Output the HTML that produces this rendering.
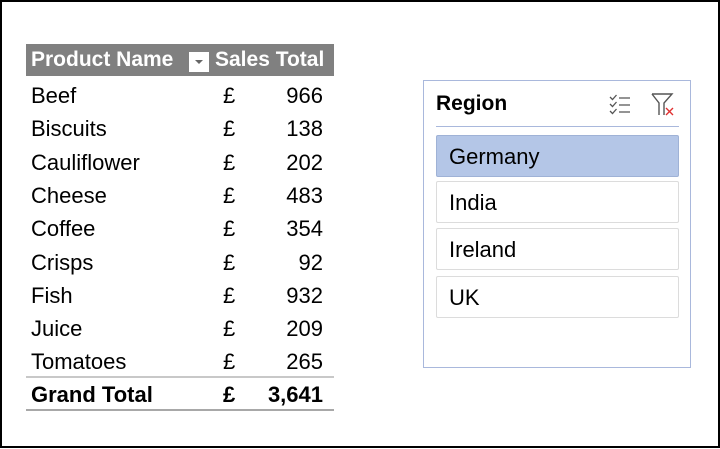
<!DOCTYPE html>
<html><head><meta charset="utf-8"><style>
*{margin:0;padding:0;box-sizing:border-box}
body{width:720px;height:449px;background:#fff;font-family:"Liberation Sans",sans-serif;overflow:hidden;position:relative}
.frame{position:absolute;left:0;top:0;width:720px;height:448px;border:2px solid #000}
.hdr{position:absolute;left:26px;top:44px;width:308px;height:32px;background:#808080;color:#fff;font-weight:bold;font-size:21px}
.row{position:absolute;left:26px;width:308px;height:33px;font-size:22px;line-height:33px}
.row span{position:absolute;top:1px}
.n{left:5px}.p{left:197px}.v{right:11px}
.gt{font-weight:bold;border-top:2px solid #c8c8c8;border-bottom:2px solid #a8a8a8}
.sl{position:absolute;left:423px;top:80px;width:268px;height:288px;border:1px solid #a9b8dc}
.item{position:absolute;left:12px;width:243px;height:42px;border:1px solid #dcdcdc;border-radius:2px;font-size:22px;line-height:42px;padding-left:12px}
</style></head><body>
<div class="frame"></div>
<div class="hdr">
 <span style="position:absolute;left:5px;top:4px">Product Name</span>
 <span style="position:absolute;left:163px;top:8px;width:20px;height:20px;background:#fff"><span style="position:absolute;left:6px;top:8px;border-left:4px solid transparent;border-right:4px solid transparent;border-top:4px solid #666"></span></span>
 <span style="position:absolute;left:189px;top:4px">Sales Total</span>
</div>
<div class="row" style="top:78px"><span class="n">Beef</span><span class="p">£</span><span class="v">966</span></div>
<div class="row" style="top:111px"><span class="n">Biscuits</span><span class="p">£</span><span class="v">138</span></div>
<div class="row" style="top:145px"><span class="n">Cauliflower</span><span class="p">£</span><span class="v">202</span></div>
<div class="row" style="top:178px"><span class="n">Cheese</span><span class="p">£</span><span class="v">483</span></div>
<div class="row" style="top:211px"><span class="n">Coffee</span><span class="p">£</span><span class="v">354</span></div>
<div class="row" style="top:245px"><span class="n">Crisps</span><span class="p">£</span><span class="v">92</span></div>
<div class="row" style="top:278px"><span class="n">Fish</span><span class="p">£</span><span class="v">932</span></div>
<div class="row" style="top:311px"><span class="n">Juice</span><span class="p">£</span><span class="v">209</span></div>
<div class="row" style="top:344px"><span class="n">Tomatoes</span><span class="p">£</span><span class="v">265</span></div>
<div class="row gt" style="top:376px;height:35px;line-height:31px"><span class="n">Grand Total</span><span class="p">£</span><span class="v">3,641</span></div>

<div class="sl">
 <div style="position:absolute;left:12px;top:11px;font-size:21px;font-weight:bold">Region</div>
 <svg style="position:absolute;left:185px;top:13px" width="24" height="22" viewBox="0 0 24 22" fill="none" stroke="#555" stroke-width="1.3">
  <path d="M1 3l2.5 2.5 4-4.5M1 10l2.5 2.5 4-4.5M1 17l2.5 2.5 4-4.5"/><path d="M10 4h11M10 11h11M10 18h11"/>
 </svg>
 <svg style="position:absolute;left:227px;top:11px" width="28" height="26" viewBox="0 0 28 26" fill="none" stroke-width="1.4">
  <path d="M1 2h20l-8 9v12" stroke="#555"/><path d="M1 2l7 9v12" stroke="#555"/>
  <path d="M15 16l7 7M22 16l-7 7" stroke="#e03030"/>
 </svg>
 <div style="position:absolute;left:12px;top:45px;width:243px;height:1px;background:#a9b8dc"></div>
 <div class="item" style="top:54px;background:#b4c6e7;border-color:#9fb2d6">Germany</div>
 <div class="item" style="top:100px">India</div>
 <div class="item" style="top:147px">Ireland</div>
 <div class="item" style="top:195px">UK</div>
</div>
</body></html>
